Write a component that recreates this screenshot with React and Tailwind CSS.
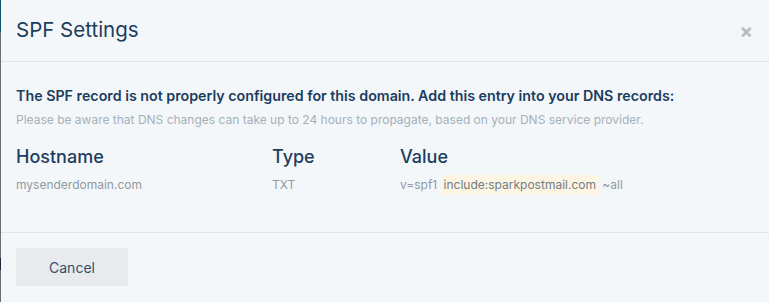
const font = { fontFamily: "Inter, 'Noto Sans', sans-serif" };

function Column({ title, children, className }) {
  return (
    <div className={className}>
      <div className="text-[18px] leading-6 font-medium text-[#1b3d5e]">{title}</div>
      <div className="mt-1.5 text-[12px] leading-5 text-[#8f9aa4]">{children}</div>
    </div>
  );
}

export default function App() {
  return (
    <div className="flex h-[302px] w-[769px] bg-[#f4f7f9]" style={font}>
      {/* edge of the page behind the dialog */}
      <div className="flex w-px flex-col bg-[#6b6f73]">
        <div className="h-[32px] bg-[#0f5668]" />
        <div className="mt-[226px] h-[12px] bg-[#1d2c3c]" />
      </div>

      <div className="flex flex-1 flex-col">
        <div className="flex h-[62px] items-center justify-between border-b border-[#e1e5e9] pl-[15px] pr-[16px]">
          <h2 className="text-[20.5px] font-normal text-[#1b3d5e]">SPF Settings</h2>
          <span className="text-[20px] font-bold leading-none text-[#b9bcbf]">×</span>
        </div>

        <div className="flex h-[171px] flex-col border-b border-[#e1e5e9] pl-[15px] pt-[24px]">
          <p className="text-[14.25px] font-semibold leading-5 text-[#1b3d5e]">
            The SPF record is not properly configured for this domain. Add this entry into your DNS records:
          </p>
          <p className="mt-1.5 text-[12px] leading-4 text-[#a5b0ba]">
            Please be aware that DNS changes can take up to 24 hours to propagate, based on your DNS service provider.
          </p>
          <div className="mt-[17px] flex">
            <Column title="Hostname" className="w-[256px]">mysenderdomain.com</Column>
            <Column title="Type" className="w-[128px]">TXT</Column>
            <Column title="Value">
              v=spf1{" "}
              <span className="inline-block bg-[#fcf5e3] px-[3px] text-[#737d86]">include:sparkpostmail.com</span>{" "}
              ~all
            </Column>
          </div>
        </div>

        <div className="pl-[15px] pt-[15px]">
          <button className="h-[38px] w-[112px] rounded-[3px] bg-[#e7ebee] text-[14px] text-[#34506b]">
            Cancel
          </button>
        </div>
      </div>
    </div>
  );
}
